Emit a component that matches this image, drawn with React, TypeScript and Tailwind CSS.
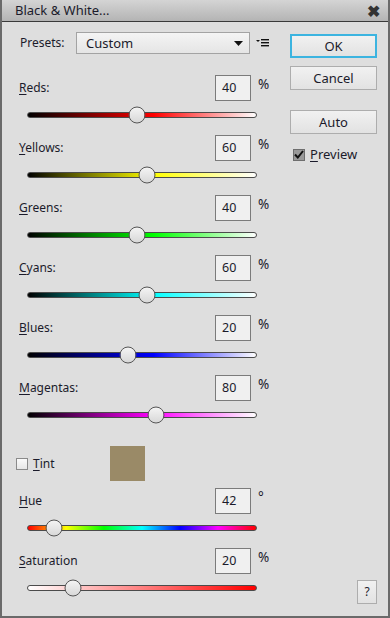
import React from 'react';

type SliderSpec = {
  label: string;
  key: string;
  rest: string;
  value: number;
  unit: string;
  min: number;
  max: number;
  gradient: string;
};

const channels: SliderSpec[] = [
  { label: 'R', key: 'r', rest: 'eds:', value: 40, unit: '%', min: -200, max: 300, gradient: 'bg-[linear-gradient(to_right,#000_0%,#f00_55%,#fff_100%)]' },
  { label: 'Y', key: 'y', rest: 'ellows:', value: 60, unit: '%', min: -200, max: 300, gradient: 'bg-[linear-gradient(to_right,#000_0%,#ff0_55%,#fff_100%)]' },
  { label: 'G', key: 'g', rest: 'reens:', value: 40, unit: '%', min: -200, max: 300, gradient: 'bg-[linear-gradient(to_right,#000_0%,#0f0_55%,#fff_100%)]' },
  { label: 'C', key: 'c', rest: 'yans:', value: 60, unit: '%', min: -200, max: 300, gradient: 'bg-[linear-gradient(to_right,#000_0%,#0ff_55%,#fff_100%)]' },
  { label: 'B', key: 'b', rest: 'lues:', value: 20, unit: '%', min: -200, max: 300, gradient: 'bg-[linear-gradient(to_right,#000_0%,#00f_55%,#fff_100%)]' },
  { label: 'M', key: 'm', rest: 'agentas:', value: 80, unit: '%', min: -200, max: 300, gradient: 'bg-[linear-gradient(to_right,#000_0%,#f0f_55%,#fff_100%)]' },
];

const hue: SliderSpec = {
  label: 'H', key: 'h', rest: 'ue', value: 42, unit: '°', min: 0, max: 360,
  gradient: 'bg-[linear-gradient(to_right,#f00_0%,#ff0_16.7%,#0f0_33.3%,#0ff_50%,#00f_66.7%,#f0f_83.3%,#f00_100%)]',
};

const saturation: SliderSpec = {
  label: 'S', key: 's', rest: 'aturation', value: 20, unit: '%', min: 0, max: 100,
  gradient: 'bg-[linear-gradient(to_right,#fff_0%,#f00_100%)]',
};

function Track({ spec }: { spec: SliderSpec }) {
  const pct = (spec.value - spec.min) / (spec.max - spec.min);
  return (
    <div className="relative ml-[25px] w-[230px] h-[6px]">
      <div className={`h-full w-full rounded-full border border-[#4b4b4b] ${spec.gradient}`} />
      <div
        className="absolute top-1/2 h-[17px] w-[17px] -translate-x-1/2 -translate-y-1/2 rounded-full border border-[#555] bg-[linear-gradient(to_bottom,#f4f4f4,#d8d8d8)]"
        style={{ left: `${pct * 100}%` }}
      />
    </div>
  );
}

function SliderRow({ spec }: { spec: SliderSpec }) {
  return (
    <div className="h-[60px]">
      <div className="flex h-[26px] items-center pl-[17px]">
        <span className="flex-1">
          <span className="underline underline-offset-2">{spec.label}</span>
          {spec.rest}
        </span>
        <div className="flex h-[26px] w-[36px] items-center border border-[#7b7b7b] bg-[#f0f0f0] pl-[6px] text-[12.5px]">
          {spec.value}
        </div>
        <span className="ml-[7px] w-[19px] -translate-y-[3px] text-[13.5px]">{spec.unit}</span>
      </div>
      <div className="mt-[11px]">
        <Track spec={spec} />
      </div>
    </div>
  );
}

function Button({ children, primary }: { children: React.ReactNode; primary?: boolean }) {
  return (
    <div
      className={`flex h-[24px] w-[87px] items-center justify-center bg-[linear-gradient(to_bottom,#f1f1f1,#e2e2e2)] ${
        primary ? 'border-2 border-[#3cb4e0]' : 'border border-[#adadad]'
      }`}
    >
      {children}
    </div>
  );
}

export default function App() {
  return (
    <div
      className="h-[618px] w-[390px] overflow-hidden border-2 border-t-0 border-[#6a6a6a] bg-[#dedede] text-[12px] leading-none text-[#1b1b2b]"
      style={{ fontFamily: '"Noto Sans", "Open Sans", sans-serif' }}
    >
      {/* title bar */}
      <div className="flex h-[22px] items-center justify-between border-b border-[#3a3a3a] bg-[linear-gradient(to_bottom,#d4d4d4,#b4b4b4)] pl-[13px] pr-[8px] text-[13px]">
        <span>Black &amp; White...</span>
        <span className="text-[16px] font-bold text-[#333]">✖</span>
      </div>

      <div className="flex">
        {/* left column */}
        <div className="w-[275px]">
          <div className="mt-[10px] flex h-[22px] items-center pl-[18px]">
            <span className="w-[56px]">Presets:</span>
            <div className="flex h-[22px] w-[174px] items-center justify-between border border-[#a3a3a3] bg-[linear-gradient(to_bottom,#f4f4f4,#e5e5e5)] pl-[9px] pr-[6px] text-[13px]">
              <span>Custom</span>
              <svg width="9" height="5" viewBox="0 0 9 5"><path d="M0 0h9L4.5 5z" fill="#111" /></svg>
            </div>
            <svg className="ml-[6px]" width="13" height="9" viewBox="0 0 13 9">
              <path d="M0 1h4L2 3z" fill="#111" />
              <rect x="5" y="0" width="8" height="1.4" fill="#111" />
              <rect x="5" y="3" width="8" height="1.4" fill="#111" />
              <rect x="5" y="6" width="8" height="1.4" fill="#111" />
            </svg>
          </div>

          <div className="mt-[21px]">
            {channels.map((c) => (
              <SliderRow key={c.key} spec={c} />
            ))}
          </div>

          <div className="flex h-[53px] items-center pl-[14px] pt-[4px]">
            <div className="h-[12px] w-[12px] border border-[#8a8a8a] bg-[linear-gradient(to_bottom,#fafafa,#e6e6e6)]" />
            <span className="ml-[5px] w-[77px]">
              <span className="underline underline-offset-2">T</span>int
            </span>
            <div className="h-[35px] w-[35px] bg-[#9a8a67]" />
          </div>

          <SliderRow spec={hue} />
          <SliderRow spec={saturation} />
        </div>

        {/* right column */}
        <div className="ml-[13px] flex flex-col text-[13px]">
          <div className="mt-[12px]">
            <Button primary>OK</Button>
          </div>
          <div className="mt-[8px]">
            <Button>Cancel</Button>
          </div>
          <div className="mt-[20px]">
            <Button>Auto</Button>
          </div>
          <div className="mt-[14px] flex items-center pl-[3px]">
            <div className="flex h-[12px] w-[12px] items-center justify-center border border-[#6e6e6e] bg-[#9a9a9a]">
              <svg width="10" height="9" viewBox="0 0 10 9">
                <path d="M1 4.5l2.8 3L9 1" stroke="#111" strokeWidth="2" fill="none" />
              </svg>
            </div>
            <span className="ml-[5px]">
              <span className="underline underline-offset-2">P</span>review
            </span>
          </div>
          <div className="mt-[419px] ml-[67px] flex h-[24px] w-[20px] items-center justify-center border border-[#adadad] bg-[linear-gradient(to_bottom,#f1f1f1,#e2e2e2)] text-[12px]">
            ?
          </div>
        </div>
      </div>
    </div>
  );
}
